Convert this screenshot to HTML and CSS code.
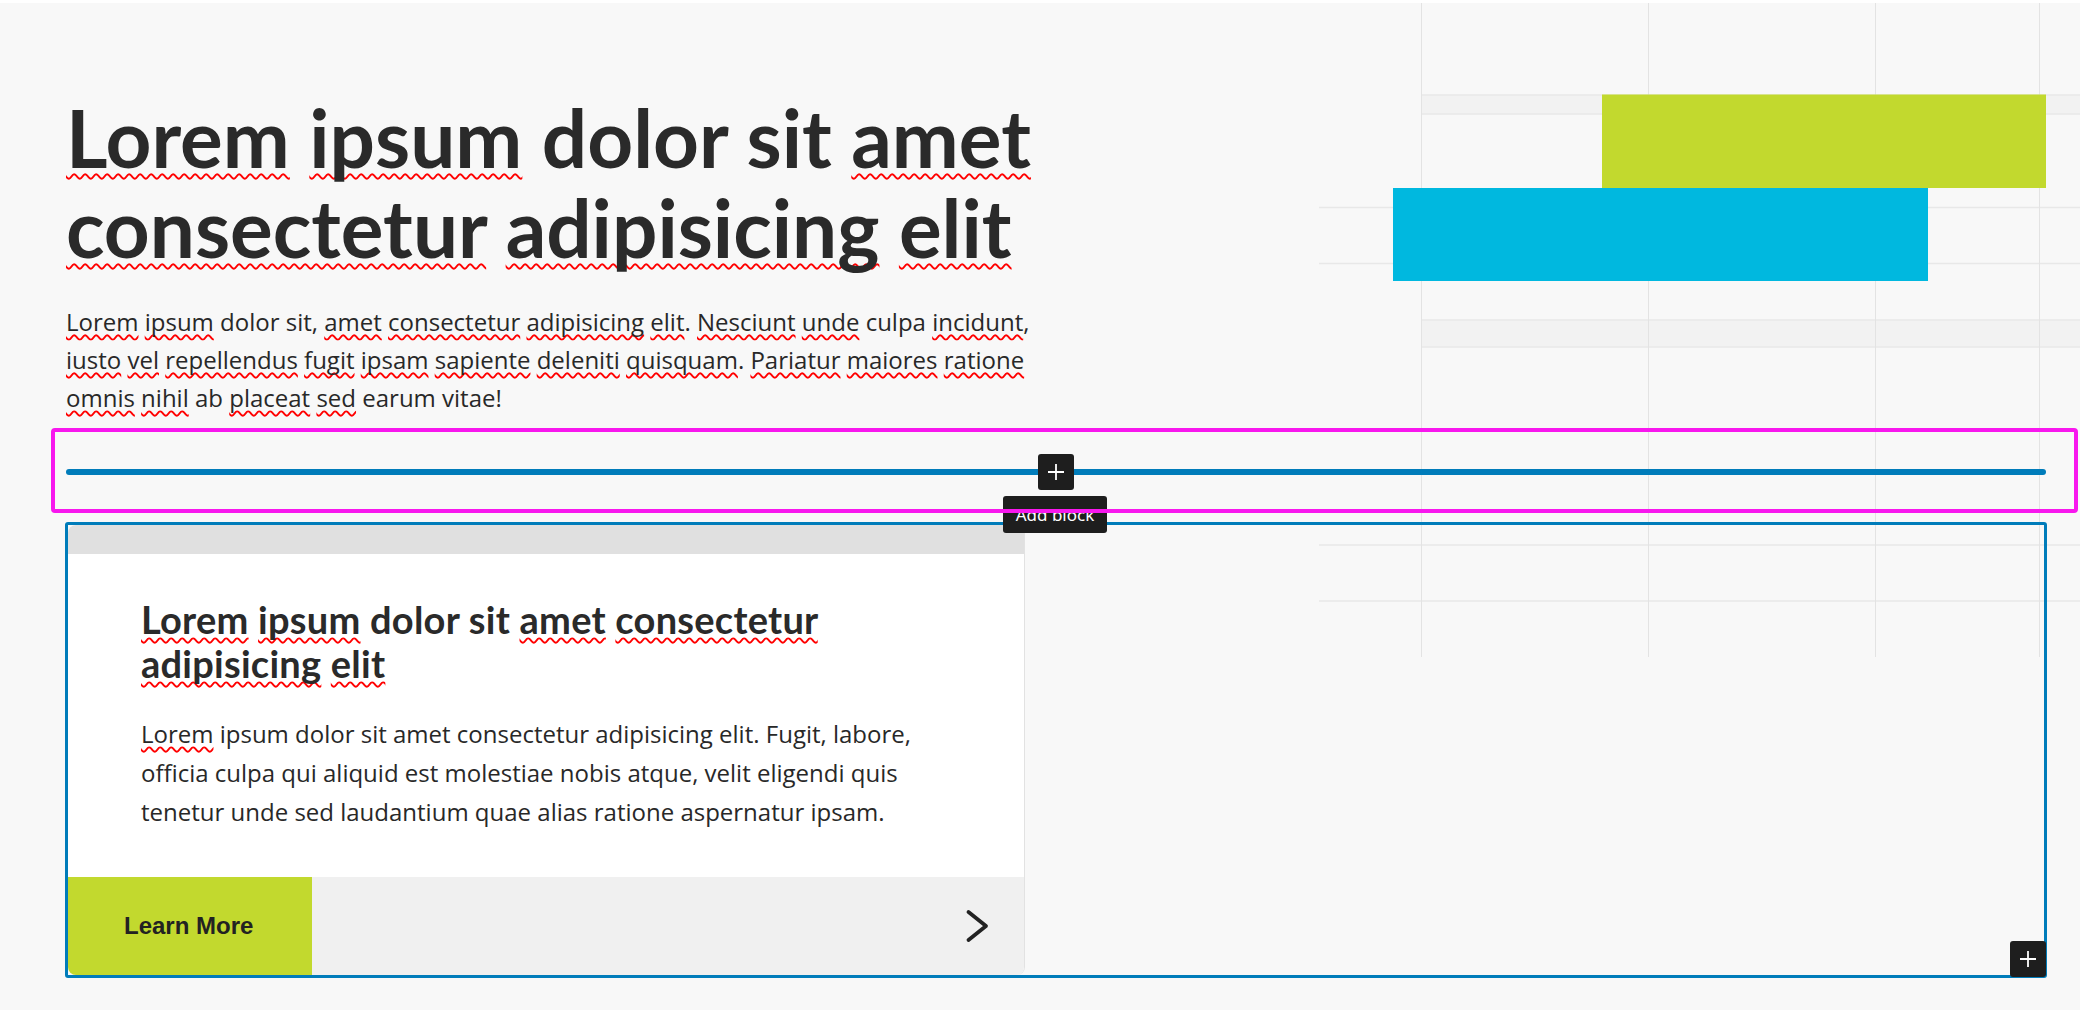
FILE: index.html
```html
<!DOCTYPE html>
<html lang="en">
<head>
<meta charset="utf-8">
<title>Editor canvas</title>
<link rel="stylesheet" href="styles.css">
</head>
<body>
<div class="page">
  <svg class="hero-art" viewBox="1319 3 761 654" aria-hidden="true">
    <rect class="band" x="1421" y="95" width="659" height="19"/>
    <rect class="band" x="1421" y="320" width="659" height="27"/>
    <line class="hline" x1="1421" y1="95" x2="2080" y2="95"/>
    <line class="hline" x1="1421" y1="114" x2="2080" y2="114"/>
    <line class="hline" x1="1421" y1="320" x2="2080" y2="320"/>
    <line class="hline" x1="1421" y1="347" x2="2080" y2="347"/>
    <line class="hline" x1="1319" y1="207.5" x2="2080" y2="207.5"/>
    <line class="hline" x1="1319" y1="263.5" x2="2080" y2="263.5"/>
    <line class="hline" x1="1319" y1="545" x2="2080" y2="545"/>
    <line class="hline" x1="1319" y1="601" x2="2080" y2="601"/>
    <line class="vline" x1="1421.5" y1="3" x2="1421.5" y2="657"/>
    <line class="vline" x1="1648.5" y1="3" x2="1648.5" y2="657"/>
    <line class="vline" x1="1875.5" y1="3" x2="1875.5" y2="657"/>
    <line class="vline" x1="2039.5" y1="3" x2="2039.5" y2="657"/>
    <rect class="bar-green" x="1602" y="94.5" width="444" height="93.5"/>
    <rect class="bar-cyan" x="1393" y="188" width="535" height="93"/>
  </svg>

  <section class="hero">
    <h1 class="hero-title"><span class="sp">Lorem</span> <span class="sp">ipsum</span> dolor sit <span class="sp">amet</span> <span class="sp">consectetur</span> <span class="sp">adipisicing</span> <span class="sp">elit</span></h1>
    <p class="hero-text"><span class="sp">Lorem</span> <span class="sp">ipsum</span> dolor sit, <span class="sp">amet</span> <span class="sp">consectetur</span> <span class="sp">adipisicing</span> <span class="sp">elit</span>. <span class="sp">Nesciunt</span> <span class="sp">unde</span> culpa <span class="sp">incidunt</span>, <span class="sp">iusto</span> <span class="sp">vel</span> <span class="sp">repellendus</span> <span class="sp">fugit</span> <span class="sp">ipsam</span> <span class="sp">sapiente</span> <span class="sp">deleniti</span> <span class="sp">quisquam</span>. <span class="sp">Pariatur</span> <span class="sp">maiores</span> <span class="sp">ratione</span> <span class="sp">omnis</span> <span class="sp">nihil</span> ab <span class="sp">placeat</span> <span class="sp">sed</span> earum vitae!</p>
  </section>

  <div class="separator-block">
    <div class="separator-line"></div>
    <button class="inserter inserter-mid" type="button" aria-label="Add block">
      <svg viewBox="0 0 18 18" width="18" height="18"><path d="M9 1v16M1 9h16"/></svg>
    </button>
    <div class="tooltip">Add block</div>
  </div>

  <div class="columns-block">
    <article class="card">
      <div class="card-top"></div>
      <div class="card-body">
        <h2 class="card-title"><span class="sp">Lorem</span> <span class="sp">ipsum</span> dolor sit <span class="sp">amet</span> <span class="sp">consectetur</span> <span class="sp">adipisicing</span> <span class="sp">elit</span></h2>
        <p class="card-text"><span class="sp">Lorem</span> ipsum dolor sit amet consectetur adipisicing elit. Fugit, labore, officia culpa qui aliquid est molestiae nobis atque, velit eligendi quis tenetur unde sed laudantium quae alias ratione aspernatur ipsam.</p>
      </div>
      <div class="card-footer">
        <span class="card-cta">Learn More</span>
        <svg class="chevron" viewBox="0 0 24 34" width="24" height="34"><polyline points="3.5,3 21,17 3.5,31"/></svg>
      </div>
    </article>
    <div class="column-empty"></div>
    <button class="inserter inserter-corner" type="button" aria-label="Add block">
      <svg viewBox="0 0 18 18" width="18" height="18"><path d="M9 1v16M1 9h16"/></svg>
    </button>
  </div>
</div>
</body>
</html>
```

FILE: styles.css
```css
html {
  background: #ffffff;
}

body {
  margin: 0;
  padding-top: 3px;
  font-family: "Open Sans", "Liberation Sans", sans-serif;
  color: #282828;
}

.page {
  position: relative;
  height: 1007px;
  background: #f8f8f8;
  overflow: hidden;
}

/* decorative hero graphic */
.hero-art {
  position: absolute;
  left: 1319px;
  top: 0;
  width: 761px;
  height: 654px;
}

.hero-art .band {
  fill: #f2f2f2;
}

.hero-art .hline {
  stroke: #e8e8e8;
  stroke-width: 1.5;
}

.hero-art .vline {
  stroke: #e3e3e3;
  stroke-width: 1;
}

.hero-art .bar-green {
  fill: #c2d92e;
}

.hero-art .bar-cyan {
  fill: #00b8df;
}

/* hero text */
.hero {
  position: relative;
  max-width: 1000px;
  padding: 89px 0 0 66px;
}

.hero-title {
  margin: 0;
  font-family: "Lato", "Liberation Sans", sans-serif;
  font-size: 80px;
  line-height: 90px;
  font-weight: 700;
  color: #2a2a2a;
}

.hero-text {
  margin: 30.5px 0 0;
  font-size: 24px;
  line-height: 38.4px;
  font-weight: 400;
}

.sp {
  text-decoration: underline wavy #ff0000;
  text-decoration-thickness: 1.5px;
  text-underline-offset: 3px;
  text-decoration-skip-ink: none;
}

.hero-title .sp {
  text-underline-offset: 5px;
}

/* separator block (selected) */
.separator-block {
  position: relative;
  box-sizing: border-box;
  width: 2027px;
  height: 85px;
  margin: 10.6px 0 0 51px;
  padding: 41px 0 0 15px;
}

.separator-block::after {
  content: "";
  position: absolute;
  inset: 0;
  border: 4px solid #f817ee;
  border-radius: 4px;
  z-index: 3;
  pointer-events: none;
}

.separator-line {
  width: 1980px;
  height: 6px;
  border-radius: 3px;
  background: #007cba;
}

.inserter {
  position: absolute;
  width: 36px;
  height: 36px;
  padding: 0;
  border: 0;
  border-radius: 3px;
  background: #1e1e1e;
  display: flex;
  align-items: center;
  justify-content: center;
  cursor: pointer;
}

.inserter svg path {
  stroke: #ffffff;
  stroke-width: 1.8;
  fill: none;
}

.inserter-mid {
  left: 987px;
  top: 26px;
}

.tooltip {
  position: absolute;
  left: 952px;
  top: 68px;
  width: 104px;
  height: 37px;
  border-radius: 3px;
  background: #1e1e1e;
  color: #ffffff;
  font-family: "Noto Sans", "DejaVu Sans", sans-serif;
  font-size: 17px;
  line-height: 37px;
  text-align: center;
  z-index: 2;
}

/* columns block (selected) */
.columns-block {
  position: relative;
  box-sizing: border-box;
  width: 1982px;
  height: 456px;
  margin: 9px 0 0 65px;
  border: 3px solid #007cba;
  border-radius: 3px;
  display: grid;
  grid-template-columns: 957px 1fr;
}

.inserter-corner {
  right: -2px;
  bottom: -2px;
}

.card {
  display: flex;
  flex-direction: column;
  background: #ffffff;
  border-right: 1px solid #e2e2e2;
  border-radius: 8px;
  overflow: hidden;
}

.card-top {
  height: 29px;
  background: #e0e0e0;
}

.card-body {
  flex: 1;
  padding: 43px 72px 0 73px;
}

.card-title {
  margin: 0;
  font-family: "Lato", "Liberation Sans", sans-serif;
  font-size: 38px;
  line-height: 44px;
  font-weight: 700;
  letter-spacing: 0.25px;
  color: #2a2a2a;
}

.card-title .sp {
  text-underline-offset: 3px;
}

.card-text {
  margin: 29px 0 0;
  font-size: 24px;
  line-height: 39px;
}

.card-footer {
  height: 98px;
  display: flex;
  align-items: center;
  background: #f0f0f0;
}

.card-cta {
  box-sizing: border-box;
  width: 244px;
  height: 100%;
  display: flex;
  align-items: center;
  padding-left: 56px;
  background: #c2d92e;
  font-family: "Liberation Sans", Arial, sans-serif;
  font-size: 24px;
  font-weight: 700;
  color: #222222;
}

.chevron {
  margin-left: auto;
  margin-right: 35px;
}

.chevron polyline {
  fill: none;
  stroke: #222222;
  stroke-width: 3.8;
  stroke-linecap: round;
  stroke-linejoin: round;
}
```
